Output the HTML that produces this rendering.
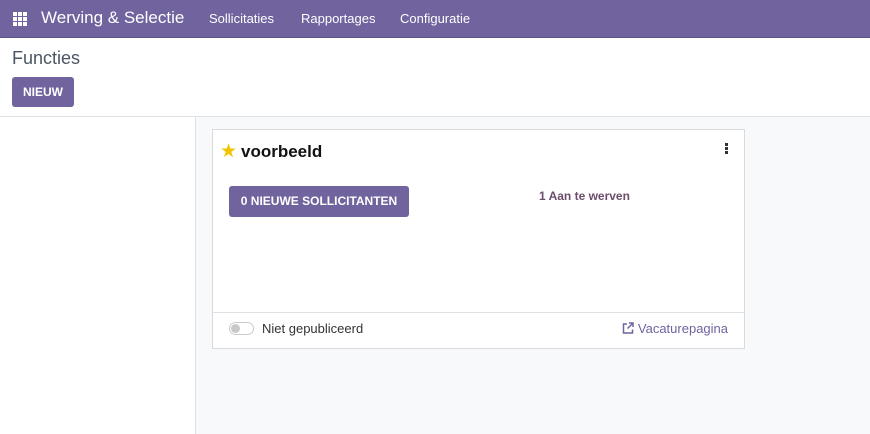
<!DOCTYPE html><html><head><style>
*{box-sizing:border-box;margin:0;padding:0}
body{width:870px;height:434px;overflow:hidden;font-family:"Liberation Sans",sans-serif;background:#fff;position:relative}
.nav{height:38px;background:#71639e;color:#fff;position:relative;border-bottom:1px solid #5f5389}
.nav span{position:absolute;top:11px;font-size:13px}
.cp{height:79px;border-bottom:1px solid #dee2e6;position:relative}
.side{position:absolute;left:0;top:117px;width:196px;height:317px;border-right:1px solid #dee2e6;background:#fff}
.main{position:absolute;left:196px;top:117px;right:0;bottom:0;background:#f8f9fa}
.btn{position:absolute;background:#71639e;color:#fff;font-weight:bold;border-radius:3px;text-align:center}
.card{position:absolute;left:212px;top:129px;width:533px;height:220px;background:#fff;border:1px solid #d8dadd}
</style></head><body>
<div class="nav">
<svg style="position:absolute;left:13px;top:12px" width="14" height="14"><g fill="#fff"><rect x="0" y="0" width="4" height="4"/><rect x="5" y="0" width="4" height="4"/><rect x="10" y="0" width="4" height="4"/><rect x="0" y="5" width="4" height="4"/><rect x="5" y="5" width="4" height="4"/><rect x="10" y="5" width="4" height="4"/><rect x="0" y="10" width="4" height="4"/><rect x="5" y="10" width="4" height="4"/><rect x="10" y="10" width="4" height="4"/></g></svg>
<span style="left:41px;top:8px;font-size:17px">Werving &amp; Selectie</span>
<span style="left:209px">Sollicitaties</span>
<span style="left:301px">Rapportages</span>
<span style="left:400px">Configuratie</span>
</div>
<div class="cp">
<div style="position:absolute;left:12px;top:10px;font-size:18px;color:#4b5563">Functies</div>
<div class="btn" style="left:12px;top:39px;width:62px;height:30px;line-height:30px;font-size:12px">NIEUW</div>
</div>
<div class="side"></div><div class="main"></div>
<div class="card">
<div style="position:absolute;left:7px;top:10px;color:#f3c300;font-size:19px">★</div>
<div style="position:absolute;left:28px;top:12px;font-size:17px;font-weight:bold;color:#111">voorbeeld</div>
<div style="position:absolute;right:16px;top:13px;width:3px;"><div style="width:3px;height:3px;background:#333;margin-bottom:1px"></div><div style="width:3px;height:3px;background:#333;margin-bottom:1px"></div><div style="width:3px;height:3px;background:#333"></div></div>
<div class="btn" style="left:16px;top:56px;width:180px;height:31px;line-height:31px;font-size:12px">0 NIEUWE SOLLICITANTEN</div>
<div style="position:absolute;left:326px;top:59px;font-size:12px;font-weight:bold;color:#6b4e6b">1 Aan te werven</div>
<div style="position:absolute;left:0;right:0;top:182px;border-top:1px solid #dee2e6"></div>
<div style="position:absolute;left:16px;top:192px;width:25px;height:13px;border:1px solid #ccc;border-radius:7px"><div style="width:9px;height:9px;background:#c8c8c8;border-radius:50%;margin:1px"></div></div>
<div style="position:absolute;left:49px;top:191px;font-size:13px;color:#333">Niet gepubliceerd</div>
<div style="position:absolute;right:16px;top:191px;font-size:13px;color:#71639e"><svg width="12" height="12" style="vertical-align:-1px;margin-right:4px" fill="none" stroke="#71639e" stroke-width="1.5"><path d="M5 2H1.5v9h9V7.5"/><path d="M7 1h4v4M11 1L5.5 6.5"/></svg>Vacaturepagina</div>
</div>
</body></html>
